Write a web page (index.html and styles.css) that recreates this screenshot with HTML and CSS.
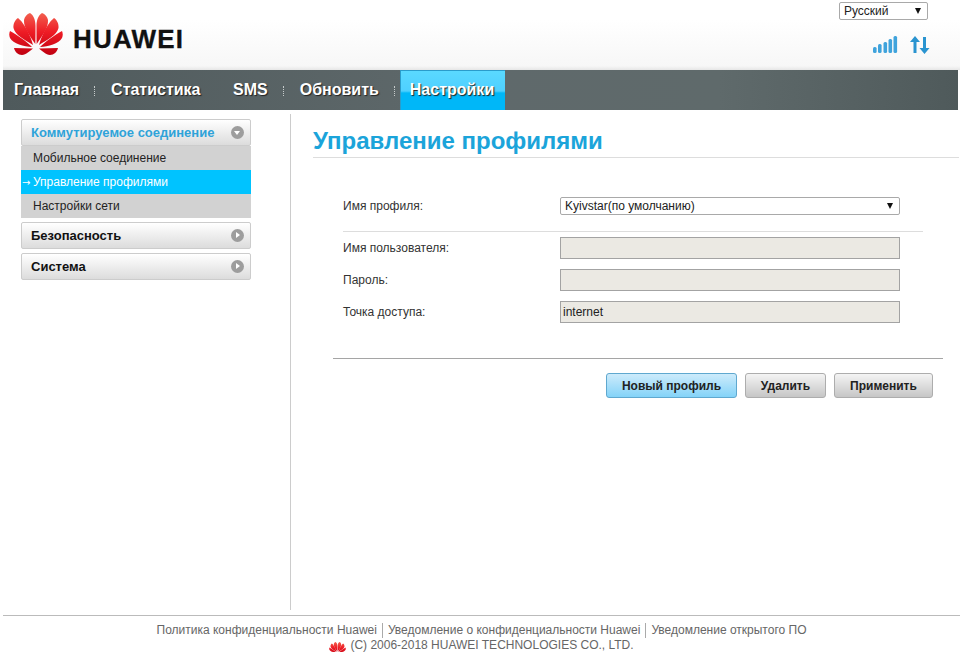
FILE: index.html
```html
<!DOCTYPE html>
<html lang="ru">
  <head>
    <meta charset="UTF-8" />
    <meta name="viewport" content="width=device-width, initial-scale=1.0" />
    <title>Управление профилями</title>
    <link rel="stylesheet" href="styles.css">
  </head>
  <body>
    <svg class="defs" width="0" height="0">
      <defs>
        <linearGradient id="petal" gradientUnits="userSpaceOnUse" x1="0" y1="13" x2="0" y2="55">
          <stop offset="0" stop-color="#f2604f" />
          <stop offset="0.45" stop-color="#ee1c25" />
          <stop offset="1" stop-color="#c00010" />
        </linearGradient>
        <g id="petals-half">
          <path d="M35.3 44 C30 36 23.5 28 24 20 C24.5 17 27 14 30 13 C33.5 15 35.5 20 35.5 26 C35.5 33 35.5 39 35.3 44Z" />
          <path d="M33 45 C25 40 15 35 13.5 28 C13 24 15 20 18 18 C23 22 26 28 28.5 33 C30.5 37 32 41 33 45Z" />
          <path d="M32 47 C24 46.5 13 44 10 38 C9 36 9 33 10 31 C17 35 26 41 32 47Z" />
          <path d="M33 48.5 L14 48 C15 52 18 55 22 55 C26 54.5 30 51 33 48.5Z" />
        </g>
        <symbol id="huawei-flower" viewBox="9 13 54 42">
          <g fill="url(#petal)">
            <use href="#petals-half" />
            <use href="#petals-half" transform="matrix(-1 0 0 1 72 0)" />
          </g>
        </symbol>
      </defs>
    </svg>

    <div class="page">
      <header class="top">
        <div class="brand">
          <svg class="brand-flower"><use href="#huawei-flower" /></svg>
          <span class="brand-name">HUAWEI</span>
        </div>
        <div class="status">
          <div class="lang">
            <select>
              <option>Русский</option>
            </select>
          </div>
          <div class="status-icons">
            <svg class="signal" width="25" height="17" viewBox="0 0 25 17">
              <rect x="0" y="11" width="3.6" height="6" rx="1.5" />
              <rect x="5" y="8" width="3.6" height="9" rx="1.5" />
              <rect x="10.5" y="6" width="3.6" height="11" rx="1.5" />
              <rect x="15.5" y="3" width="3.6" height="14" rx="1.5" />
              <rect x="20.5" y="0" width="3.6" height="17" rx="1.5" />
            </svg>
            <svg class="updown" width="20" height="18" viewBox="0 0 20 18">
              <path d="M5 0 L10 6 L6.5 6 L6.5 17 L3.5 17 L3.5 6 L0 6Z" />
              <path d="M14.5 18 L19.5 12 L16 12 L16 1 L13 1 L13 12 L9.5 12Z" />
            </svg>
          </div>
        </div>
      </header>

      <nav class="nav">
        <a class="nav-item">Главная</a>
        <span class="nav-sep"></span>
        <a class="nav-item">Статистика</a>
        <span class="nav-sep nav-sep-hidden"></span>
        <a class="nav-item">SMS</a>
        <span class="nav-sep"></span>
        <a class="nav-item">Обновить</a>
        <span class="nav-sep"></span>
        <a class="nav-item nav-active">Настройки</a>
      </nav>

      <div class="main">
        <aside class="side">
          <div class="menu-head menu-open">Коммутируемое соединение<span class="menu-icon icon-down"></span></div>
          <ul class="submenu">
            <li>Мобильное соединение</li>
            <li class="submenu-active">Управление профилями</li>
            <li>Настройки сети</li>
          </ul>
          <div class="menu-head">Безопасность<span class="menu-icon icon-right"></span></div>
          <div class="menu-head">Система<span class="menu-icon icon-right"></span></div>
        </aside>

        <section class="content">
          <h1 class="title">Управление профилями</h1>
          <form class="profile-form">
            <div class="row row-select">
              <label>Имя профиля:</label>
              <div class="profile-select">
                <select>
                  <option>Kyivstar(по умолчанию)</option>
                </select>
              </div>
            </div>
            <div class="row-line"></div>
            <div class="row">
              <label>Имя пользователя:</label>
              <input type="text" disabled />
            </div>
            <div class="row">
              <label>Пароль:</label>
              <input type="text" disabled />
            </div>
            <div class="row">
              <label>Точка доступа:</label>
              <input type="text" value="internet" disabled />
            </div>
          </form>
          <div class="actions">
            <button type="button" class="btn btn-new">Новый профиль</button>
            <button type="button" class="btn btn-delete">Удалить</button>
            <button type="button" class="btn btn-apply">Применить</button>
          </div>
        </section>
      </div>

      <footer class="foot">
        <div class="foot-links">
          <a>Политика конфиденциальности Huawei</a>
          <a>Уведомление о конфиденциальности Huawei</a>
          <a>Уведомление открытого ПО</a>
        </div>
        <div class="foot-copy">
          <svg class="foot-flower"><use href="#huawei-flower" /></svg>
          <span>(C) 2006-2018 HUAWEI TECHNOLOGIES CO., LTD.</span>
        </div>
      </footer>
    </div>
  </body>
</html>
```

FILE: styles.css
```css
html,
body {
  margin: 0;
  padding: 0;
  background: white;
}

body {
  font-family: "Liberation Sans", Arial, sans-serif;
  font-size: 12px;
  color: #333;
}

.defs {
  display: block;
  height: 0;
}

.page {
  margin: 0 3px;
}

/* header */
.top {
  height: 70px;
  display: flex;
  justify-content: space-between;
  background-image: linear-gradient(white 0, white 20px, #f7f7f7 66px, #e6e6e6 70px);
}

.brand {
  display: flex;
  align-items: flex-start;
  padding: 13px 0 0 6px;
}

.brand-flower {
  width: 54px;
  height: 42px;
}

.brand-name {
  margin: 12px 0 0 10px;
  font-size: 26px;
  line-height: 28px;
  font-weight: bold;
  letter-spacing: 1.2px;
  color: #111;
  -webkit-text-stroke: 0.3px #111;
}

.status {
  width: 92px;
  margin-right: 29px;
  padding-top: 2px;
}

.lang {
  position: relative;
  width: 89px;
}

.lang select,
.profile-select select {
  display: block;
  width: 100%;
  appearance: none;
  background: white;
  font-family: "Liberation Sans", Arial, sans-serif;
  font-size: 12px;
  color: #222;
  border: 1px solid #a9a9a9;
  border-radius: 2px;
  outline: none;
}

.lang select {
  height: 18px;
  padding: 0 0 0 4px;
}

.lang::after,
.profile-select::after {
  content: "";
  position: absolute;
  top: 6px;
  border-left: 3.5px solid transparent;
  border-right: 3.5px solid transparent;
  border-top: 6px solid #111;
}

.lang::after {
  right: 7px;
}

.status-icons {
  display: flex;
  align-items: flex-start;
  gap: 12px;
  margin: 16px 0 0 34px;
}

.signal {
  fill: #3fa3dc;
  flex: none;
}

.updown {
  fill: #2a94d0;
  flex: none;
}

/* main nav */
.nav {
  height: 40px;
  margin-right: 2px;
  display: flex;
  align-items: stretch;
  background-image: linear-gradient(to right, #4f5a5c, #5f696b 50%, #5f6a6b 75%, #4f5a5b);
}

.nav-item {
  padding: 0 11px;
  font-size: 16px;
  font-weight: bold;
  line-height: 39px;
  color: white;
  text-shadow: 1px 1px 1px #222;
}

.nav-sep {
  width: 1px;
  height: 10px;
  margin: 16px 5px 0 4px;
  border-left: 1px dotted #c6cbcb;
  box-sizing: border-box;
}

.nav-sep-hidden {
  border: none;
  margin-right: 5.5px;
}

.nav-active {
  padding: 0 11px 0 10px;
  border-top: 1px solid #2a9ccb;
  line-height: 37px;
  background-image: linear-gradient(#5ad9ff 0, #4fd0ff 20px, #00b7f8 22px, #00b7f8 100%);
  box-shadow: inset 1px 0 #2a9ccb;
}

/* layout */
.main {
  display: flex;
  height: 496px;
  margin-top: 4px;
}

.side {
  width: 230px;
  padding: 5px 0 0 18px;
  margin-right: 39px;
}

.menu-head {
  display: flex;
  align-items: center;
  justify-content: space-between;
  box-sizing: border-box;
  height: 27px;
  margin-bottom: 4px;
  padding: 0 6px 0 9px;
  border: 1px solid #ccc;
  border-radius: 2px;
  font-size: 13px;
  font-weight: bold;
  color: #111;
  background-image: linear-gradient(white, #dcdcdc);
}

.menu-open {
  margin-bottom: 0;
  color: #2fa3d9;
}

.menu-icon {
  position: relative;
  width: 13px;
  height: 13px;
  border-radius: 50%;
  background: #9d9d9d;
}

.menu-icon::after {
  content: "";
  position: absolute;
}

.icon-down::after {
  left: 3px;
  top: 5px;
  border-left: 3.5px solid transparent;
  border-right: 3.5px solid transparent;
  border-top: 4px solid white;
}

.icon-right::after {
  left: 5px;
  top: 3px;
  border-top: 3.5px solid transparent;
  border-bottom: 3.5px solid transparent;
  border-left: 4px solid white;
}

.submenu {
  list-style: none;
  margin: 0 0 4px;
  padding: 0;
  background: #d2d2d2;
}

.submenu li {
  height: 24px;
  padding-left: 12px;
  line-height: 24px;
  color: #222;
}

.submenu .submenu-active {
  background: #00c3ff;
  color: white;
}

.submenu-active::before {
  content: "→";
  display: inline-block;
  width: 11px;
  margin-left: -11px;
  font-family: "DejaVu Sans", sans-serif;
  font-size: 10px;
}

.content {
  flex: 1;
  border-left: 1px solid #ccc;
  padding-left: 22px;
}

.title {
  margin: 13px 1px 0 0;
  height: 30px;
  font-size: 24px;
  line-height: 28px;
  font-weight: bold;
  color: #1ba4da;
  border-bottom: 1px solid #ddd;
}

/* form */
.profile-form {
  margin: 39px 0 0 30px;
  width: 580px;
}

.row {
  display: flex;
  align-items: center;
  height: 22px;
  margin-bottom: 10px;
}

.row label {
  width: 217px;
  flex: none;
  color: #333;
}

.row-select {
  height: 18px;
  margin-bottom: 0;
}

.profile-select {
  position: relative;
  width: 340px;
}

.profile-select select {
  height: 18px;
  padding: 0 0 0 4px;
}

.profile-select::after {
  right: 7px;
}

.row-line {
  height: 1px;
  margin: 16px 0 5px;
  background: #ddd;
}

.row input {
  box-sizing: border-box;
  width: 340px;
  height: 22px;
  padding: 0 2px;
  border: 1px solid #a3a3a3;
  background: #ebe9e3;
  font-family: "Liberation Sans", Arial, sans-serif;
  font-size: 12px;
  color: #222;
}

.actions {
  display: flex;
  justify-content: flex-end;
  gap: 8px;
  width: 610px;
  box-sizing: border-box;
  margin: 35px 0 0 20px;
  padding: 14px 10px 0 0;
  border-top: 1px solid #a5a5a5;
}

.btn {
  box-sizing: border-box;
  height: 25px;
  padding: 0;
  border: 1px solid #adadad;
  border-radius: 3px;
  font-family: "Liberation Sans", Arial, sans-serif;
  font-size: 12px;
  font-weight: bold;
  color: #222;
  background-image: linear-gradient(#f4f4f4, #c6c6c6);
}

.btn-new {
  width: 131px;
  border-color: #5fa8cf;
  background-image: linear-gradient(#cdebfb, #84d3f8);
}

.btn-delete {
  width: 81px;
}

.btn-apply {
  width: 99px;
}

/* footer */
.foot {
  margin-top: 5px;
  border-top: 1px solid #bbb;
  text-align: center;
  color: #666;
}

.foot-links {
  display: flex;
  justify-content: center;
  padding-top: 7px;
  line-height: 15px;
}

.foot-links a {
  padding: 0 5px;
  border-left: 1px solid #aaa;
}

.foot-links a:first-child {
  border-left: none;
}

.foot-copy {
  display: flex;
  justify-content: center;
  align-items: flex-end;
  gap: 4px;
  line-height: 14px;
}

.foot-flower {
  width: 17px;
  height: 13px;
  margin-bottom: -3px;
}
```
